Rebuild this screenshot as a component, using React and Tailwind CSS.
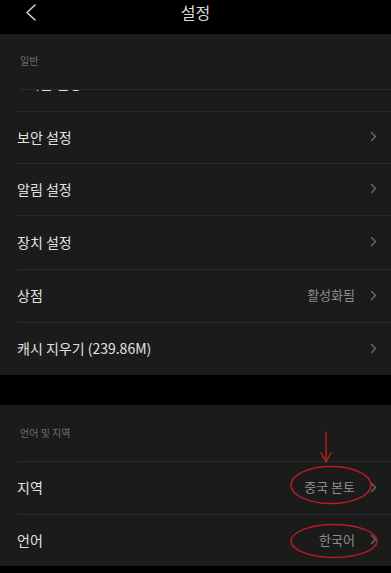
import React from 'react';

const font = "font-['Noto_Sans_CJK_KR','Noto_Sans',sans-serif]";

const Chevron = () => (
  <svg width="7" height="11" viewBox="0 0 7 11" className="shrink-0">
    <path d="M1.5 1.5 L5.5 5.5 L1.5 9.5" fill="none" stroke="#6b6b6b" strokeWidth="1.4" strokeLinecap="round" strokeLinejoin="round" />
  </svg>
);

const Row = ({ label, value, h = 'h-[53px]' }) => (
  <div className={`ml-[17px] ${h} border-t border-[#2b2b2b] flex items-center justify-between pr-[14px] pb-[2px]`}>
    <span className="text-[14px] leading-[20px] text-[#e2e2e2]">{label}</span>
    <div className="flex items-center gap-[15px]">
      {value && <span className="text-[13px] leading-[20px] text-[#8c8c8c]">{value}</span>}
      <Chevron />
    </div>
  </div>
);

const generalRows = [
  { label: '보안 설정', h: 'h-[52px]' },
  { label: '알림 설정', h: 'h-[52px]' },
  { label: '장치 설정', h: 'h-[54px]' },
  { label: '상점', value: '활성화됨' },
  { label: '캐시 지우기 (239.86M)' },
];

export default function App() {
  return (
    <div className={`relative w-[391px] h-[573px] bg-black overflow-hidden ${font}`}>
      {/* 상단 바 */}
      <div className="relative h-[34px] flex justify-center">
        <svg width="14" height="20" viewBox="0 0 14 20" className="absolute left-[24px] top-[3px]">
          <path d="M11 2 L3 9.5 L11 17" fill="none" stroke="#cfcfcf" strokeWidth="1.6" strokeLinecap="round" strokeLinejoin="round" />
        </svg>
        <span className="text-[16px] leading-[24px] text-[#dedede]">설정</span>
      </div>

      {/* 일반 */}
      <div className="bg-[#1b1b1b]">
        <div className="h-[55px] pl-[20px] pt-[20px]">
          <span className="block text-[10px] leading-[14px] text-[#6e6e6e]">일반</span>
        </div>
        <div className="ml-[19px] h-[22px] border-t border-[#2b2b2b] overflow-hidden pr-[36px]">
          <div className="-mt-[17px] flex justify-between text-[14px] leading-[20px]">
            <span className="pl-[8px] text-[#e2e2e2]">기본 설정 ·</span>
            <span className="text-[13px] text-[#8c8c8c]">기본</span>
          </div>
        </div>
        {generalRows.map((r) => (
          <Row key={r.label} label={r.label} value={r.value} h={r.h} />
        ))}
      </div>

      <div className="h-[30px]" />

      {/* 언어 및 지역 */}
      <div className="bg-[#1b1b1b]">
        <div className="h-[56px] pl-[20px] pt-[21px]">
          <span className="block text-[10px] leading-[14px] text-[#6e6e6e]">언어 및 지역</span>
        </div>
        <Row label="지역" value="중국 본토" />
        <Row label="언어" value="한국어" h="h-[52px]" />
      </div>

      {/* 빨간 표시 */}
      <svg width="391" height="573" className="absolute inset-0 pointer-events-none">
        <g fill="none" stroke="#b51d26" strokeWidth="1.5" strokeLinecap="round">
          <path d="M326 432 L326 462" />
          <path d="M321 453 L326 462 L331 453" />
          <ellipse cx="331" cy="485" rx="40" ry="18.5" />
          <ellipse cx="334" cy="541" rx="43" ry="16.5" />
        </g>
      </svg>
    </div>
  );
}
